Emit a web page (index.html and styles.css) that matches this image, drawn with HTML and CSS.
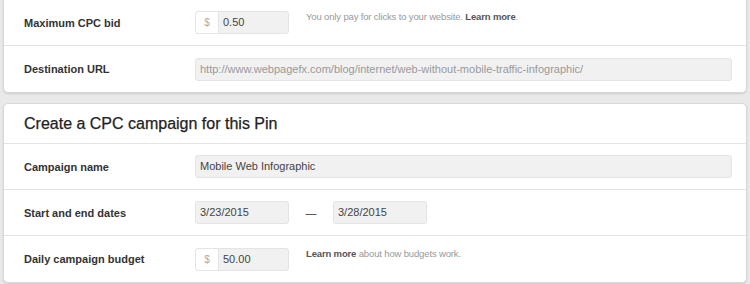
FILE: index.html
```html
<!DOCTYPE html>
<html lang="en">
  <head>
    <meta charset="UTF-8" />
    <title>Promote Pin</title>
    <link rel="stylesheet" href="styles.css">
  </head>
  <body>
    <!-- bid settings -->
    <div class="card card-top">
      <div class="row">
        <div class="label">Maximum CPC bid</div>
        <div class="field">
          <div class="input input-money"><span class="unit">$</span><span class="value">0.50</span></div>
          <p class="hint">You only pay for clicks to your website. <strong>Learn more</strong>.</p>
        </div>
      </div>
      <div class="row">
        <div class="label">Destination URL</div>
        <div class="field">
          <div class="input input-wide input-muted">http://www.webpagefx.com/blog/internet/web-without-mobile-traffic-infographic/</div>
        </div>
      </div>
    </div>

    <!-- campaign -->
    <div class="card">
      <h2 class="card-title">Create a CPC campaign for this Pin</h2>
      <div class="row">
        <div class="label">Campaign name</div>
        <div class="field">
          <div class="input input-wide">Mobile Web Infographic</div>
        </div>
      </div>
      <div class="row">
        <div class="label">Start and end dates</div>
        <div class="field">
          <div class="input input-date">3/23/2015</div>
          <span class="dash">&mdash;</span>
          <div class="input input-date">3/28/2015</div>
        </div>
      </div>
      <div class="row">
        <div class="label">Daily campaign budget</div>
        <div class="field">
          <div class="input input-money"><span class="unit">$</span><span class="value">50.00</span></div>
          <p class="hint"><strong>Learn more</strong> about how budgets work.</p>
        </div>
      </div>
    </div>
  </body>
</html>
```

FILE: styles.css
```css
body {
  font-family: "Liberation Sans", Arial, sans-serif;
  background-color: #e9e9e9;
  color: #333;
  margin: 0;
  padding: 0 3px;
}
.card {
  background: #fff;
  border: 1px solid #d9d9d9;
  border-radius: 5px;
  box-shadow: 0 1px 2px rgba(0, 0, 0, 0.12);
  margin-bottom: 10px;
}
.card-top {
  margin-top: -6px; /* top edge scrolled out of view */
  padding-top: 5px;
}
.card-title {
  margin: 0;
  padding: 0 20px;
  height: 39px;
  line-height: 39px;
  font-size: 16px;
  font-weight: normal;
  color: #222;
  border-bottom: 1px solid #e3e3e3;
  -webkit-text-stroke: 0.25px #222;
}
.row {
  display: flex;
  align-items: center;
  height: 45px;
  border-bottom: 1px solid #e3e3e3;
}
.row:last-child {
  border-bottom: none;
  height: 46px;
}
.label {
  width: 171px;
  padding-left: 20px;
  font-size: 11px;
  font-weight: bold;
  color: #333;
}
.field {
  display: flex;
  align-items: center;
  flex: 1;
}
.input {
  box-sizing: border-box;
  height: 23px;
  line-height: 21px;
  padding: 0 4px;
  background-color: #f1f1f1;
  border: 1px solid #e4e4e4;
  border-radius: 3px;
  font-size: 11px;
  color: #444;
  white-space: nowrap;
}
.input-wide {
  width: 537px;
}
.input-muted {
  color: #999;
}
.input-date {
  width: 94px;
}
.input-money {
  display: flex;
  width: 94px;
  padding: 0;
}
.unit {
  width: 22px;
  text-align: center;
  background: #fff;
  color: #aaa;
  font-size: 10px;
  border-right: 1px solid #e4e4e4;
  border-radius: 3px 0 0 3px;
}
.value {
  padding-left: 4px;
}
.dash {
  width: 44px;
  text-align: center;
  font-size: 11px;
  color: #333;
}
.hint {
  margin: 0 0 0 17px;
  font-size: 9.5px;
  letter-spacing: -0.15px;
  color: #999;
  align-self: flex-start;
}
.hint strong {
  color: #555;
}
```
